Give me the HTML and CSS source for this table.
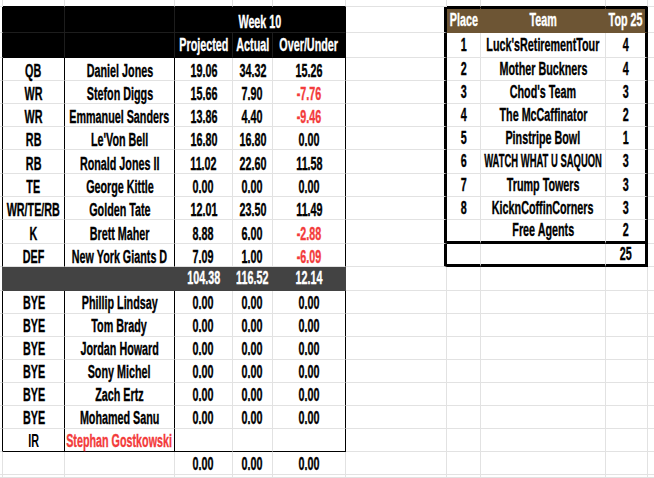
FILE: index.html
```html
<!DOCTYPE html>
<html lang="en">
<head>
<meta charset="utf-8">
<title>Week 10</title>
<link rel="stylesheet" href="styles.css">
</head>
<body>
<table class="sheet">
<colgroup><col class="w0"><col class="wa"><col class="wb"><col class="wc"><col class="wd"><col class="we"><col class="wf"><col class="wg"><col class="wh"><col class="wi"><col class="wj"></colgroup>
<tr class="h7"><td></td><td class="tb"></td><td class="tb"></td><td class="tb"></td><td class="tb"></td><td class="tb"></td><td></td><td class="tb"></td><td class="tb"></td><td class="tb"></td><td></td></tr>
<tr class="h26"><td class="k0"></td><td class="hd"></td><td class="hd"></td><td class="hd hdE wk" colspan="3"><span>Week 10</span></td><td class="rL"></td><td class="rh"><span>Place</span></td><td class="rh"><span>Team</span></td><td class="rh rR"><span>Top 25</span></td><td></td></tr>
<tr class="h25"><td class="k0"></td><td class="hd bb"></td><td class="hd bb"></td><td class="hd bb"><span>Projected</span></td><td class="hd bb"><span>Actual</span></td><td class="hd hdE bb"><span>Over/Under</span></td><td class="rL"></td><td class="rm"><span>1</span></td><td class="rm"><span>Luck'sRetirementTour</span></td><td class="rm rR"><span>4</span></td><td></td></tr>
<tr class="h23"><td class="k0"></td><td class="bk"><span>QB</span></td><td class="bk"><span>Daniel Jones</span></td><td><span>19.06</span></td><td><span>34.32</span></td><td class="bk"><span>15.26</span></td><td class="rL"></td><td class="rm"><span>2</span></td><td class="rm"><span>Mother Buckners</span></td><td class="rm rR"><span>4</span></td><td></td></tr>
<tr class="h23"><td class="k0"></td><td class="bk"><span>WR</span></td><td class="bk"><span>Stefon Diggs</span></td><td><span>15.66</span></td><td><span>7.90</span></td><td class="bk red"><span>-7.76</span></td><td class="rL"></td><td class="rm"><span>3</span></td><td class="rm"><span>Chod's Team</span></td><td class="rm rR"><span>3</span></td><td></td></tr>
<tr class="h23"><td class="k0"></td><td class="bk"><span>WR</span></td><td class="bk"><span>Emmanuel Sanders</span></td><td><span>13.86</span></td><td><span>4.40</span></td><td class="bk red"><span>-9.46</span></td><td class="rL"></td><td class="rm"><span>4</span></td><td class="rm"><span>The McCaffinator</span></td><td class="rm rR"><span>2</span></td><td></td></tr>
<tr class="h23"><td class="k0"></td><td class="bk"><span>RB</span></td><td class="bk"><span>Le'Von Bell</span></td><td><span>16.80</span></td><td><span>16.80</span></td><td class="bk"><span>0.00</span></td><td class="rL"></td><td class="rm"><span>5</span></td><td class="rm"><span>Pinstripe Bowl</span></td><td class="rm rR"><span>1</span></td><td></td></tr>
<tr class="h24"><td class="k0"></td><td class="bk"><span>RB</span></td><td class="bk"><span>Ronald Jones II</span></td><td><span>11.02</span></td><td><span>22.60</span></td><td class="bk"><span>11.58</span></td><td class="rL"></td><td class="rm"><span>6</span></td><td class="rm"><span class="nar">WATCH WHAT U SAQUON</span></td><td class="rm rR"><span>3</span></td><td></td></tr>
<tr class="h23"><td class="k0"></td><td class="bk"><span>TE</span></td><td class="bk"><span>George Kittle</span></td><td><span>0.00</span></td><td><span>0.00</span></td><td class="bk"><span>0.00</span></td><td class="rL"></td><td class="rm"><span>7</span></td><td class="rm"><span>Trump Towers</span></td><td class="rm rR"><span>3</span></td><td></td></tr>
<tr class="h23"><td class="k0"></td><td class="bk"><span>WR/TE/RB</span></td><td class="bk"><span>Golden Tate</span></td><td><span>12.01</span></td><td><span>23.50</span></td><td class="bk"><span>11.49</span></td><td class="rL"></td><td class="rm"><span>8</span></td><td class="rm"><span>KicknCoffinCorners</span></td><td class="rm rR"><span>3</span></td><td></td></tr>
<tr class="h24"><td class="k0"></td><td class="bk"><span>K</span></td><td class="bk"><span>Brett Maher</span></td><td><span>8.88</span></td><td><span>6.00</span></td><td class="bk red"><span>-2.88</span></td><td class="rL"></td><td class="rm rb"></td><td class="rm rb"><span>Free Agents</span></td><td class="rm rR rb"><span>2</span></td><td></td></tr>
<tr class="h23"><td class="k0"></td><td class="bk"><span>DEF</span></td><td class="bk"><span>New York Giants D</span></td><td><span>7.09</span></td><td><span>1.00</span></td><td class="bk red"><span>-6.09</span></td><td class="rL"></td><td class="rm rb"></td><td class="rm rb"></td><td class="rm rR rb"><span>25</span></td><td></td></tr>
<tr class="h24"><td class="kd"></td><td class="dk"></td><td class="dk"></td><td class="dk"><span>104.38</span></td><td class="dk"><span>116.52</span></td><td class="dk"><span>12.14</span></td><td></td><td></td><td></td><td></td><td></td></tr>
<tr class="h23 bn"><td class="k0"></td><td class="bk"><span>BYE</span></td><td class="bk"><span>Phillip Lindsay</span></td><td><span>0.00</span></td><td><span>0.00</span></td><td class="bk"><span>0.00</span></td><td></td><td></td><td></td><td></td><td></td></tr>
<tr class="h23 bn"><td class="k0"></td><td class="bk"><span>BYE</span></td><td class="bk"><span>Tom Brady</span></td><td><span>0.00</span></td><td><span>0.00</span></td><td class="bk"><span>0.00</span></td><td></td><td></td><td></td><td></td><td></td></tr>
<tr class="h23 bn"><td class="k0"></td><td class="bk"><span>BYE</span></td><td class="bk"><span>Jordan Howard</span></td><td><span>0.00</span></td><td><span>0.00</span></td><td class="bk"><span>0.00</span></td><td></td><td></td><td></td><td></td><td></td></tr>
<tr class="h23 bn"><td class="k0"></td><td class="bk"><span>BYE</span></td><td class="bk"><span>Sony Michel</span></td><td><span>0.00</span></td><td><span>0.00</span></td><td class="bk"><span>0.00</span></td><td></td><td></td><td></td><td></td><td></td></tr>
<tr class="h23 bn"><td class="k0"></td><td class="bk"><span>BYE</span></td><td class="bk"><span>Zach Ertz</span></td><td><span>0.00</span></td><td><span>0.00</span></td><td class="bk"><span>0.00</span></td><td></td><td></td><td></td><td></td><td></td></tr>
<tr class="h23 bn"><td class="k0"></td><td class="bk"><span>BYE</span></td><td class="bk"><span>Mohamed Sanu</span></td><td><span>0.00</span></td><td><span>0.00</span></td><td class="bk"><span>0.00</span></td><td></td><td></td><td></td><td></td><td></td></tr>
<tr class="h23 bn"><td class="k0"></td><td class="bk bb ir"><span>IR</span></td><td class="bk bb red"><span>Stephan Gostkowski</span></td><td class="bb"></td><td class="bb"></td><td class="bk bb"></td><td></td><td></td><td></td><td></td><td></td></tr>
<tr class="h23 bn"><td></td><td></td><td></td><td><span>0.00</span></td><td><span>0.00</span></td><td><span>0.00</span></td><td></td><td></td><td></td><td></td><td></td></tr>
<tr class="h3"><td></td><td></td><td></td><td></td><td></td><td></td><td></td><td></td><td></td><td></td><td></td></tr>
</table>
</body>
</html>
```

FILE: styles.css
```css
html, body {
  margin: 0;
  padding: 0;
  background: #fff;
  overflow: hidden;
}
body {
  width: 654px;
  height: 478px;
}
.sheet {
  table-layout: fixed;
  width: 668px;
  border-collapse: separate;
  border-spacing: 0;
  font: bold 17.5px/17px "Liberation Sans", Arial, sans-serif;
  color: #000;
}
.w0 { width: 3px; }
.wa { width: 62px; }
.wb { width: 110px; }
.wc { width: 58px; }
.wd { width: 40px; }
.we { width: 73px; }
.wf { width: 101px; }
.wg { width: 34px; }
.wh { width: 125px; }
.wi { width: 42px; }
.wj { width: 20px; }

.h3 { height: 3px; }
.h7 { height: 7px; }
.h23 { height: 23px; }
.h24 { height: 24px; }
.h25 { height: 25px; }
.h26 { height: 26px; }

.sheet td {
  padding: 0;
  border-right: 1px solid #e2e2e2;
  border-bottom: 1px solid #e2e2e2;
  text-align: center;
  vertical-align: bottom;
  white-space: nowrap;
}
.sheet td span {
  display: inline-block;
  margin: 0 -100px;
  transform: scaleX(0.615);
  -webkit-text-stroke: 0.35px currentColor;
}
.sheet td span.nar { transform: scaleX(0.54); }

.bn td { padding-bottom: 1px; }

.tb { border-bottom-color: #000 !important; }
.k0 { border-right-color: #000 !important; }
.kd { border-right-color: #434343 !important; }
.bk { border-right-color: #000 !important; }

.sheet td.hd {
  background: #000;
  color: #fff;
  border-right-color: #1d1d1d;
  border-bottom-color: #1d1d1d;
  vertical-align: middle;
}
.sheet td.hdE { border-right-color: #000; }
.sheet td.wk { vertical-align: bottom; padding-bottom: 1px; }
.sheet td.bb { border-bottom-color: #000; }

.sheet td.dk {
  background: #434343;
  color: #fff;
  border-right-color: #434343;
  border-bottom-color: #434343;
  vertical-align: middle;
}

.sheet td.rL { border-right: 3px solid #000; }
.sheet td.rh {
  background: #6d5534;
  color: #fff;
  border-top: 2px solid #000;
  border-right-color: #6d5534;
  border-bottom-color: #6d5534;
  vertical-align: middle;
}
.sheet td.rm { vertical-align: middle; }
.sheet td.rR { border-right: 3px solid #000; }
.sheet td.rb { border-bottom: 3px solid #000; }

.red { color: #f33b3b; }
.sheet td.ir span { -webkit-text-stroke: 0; }
```
